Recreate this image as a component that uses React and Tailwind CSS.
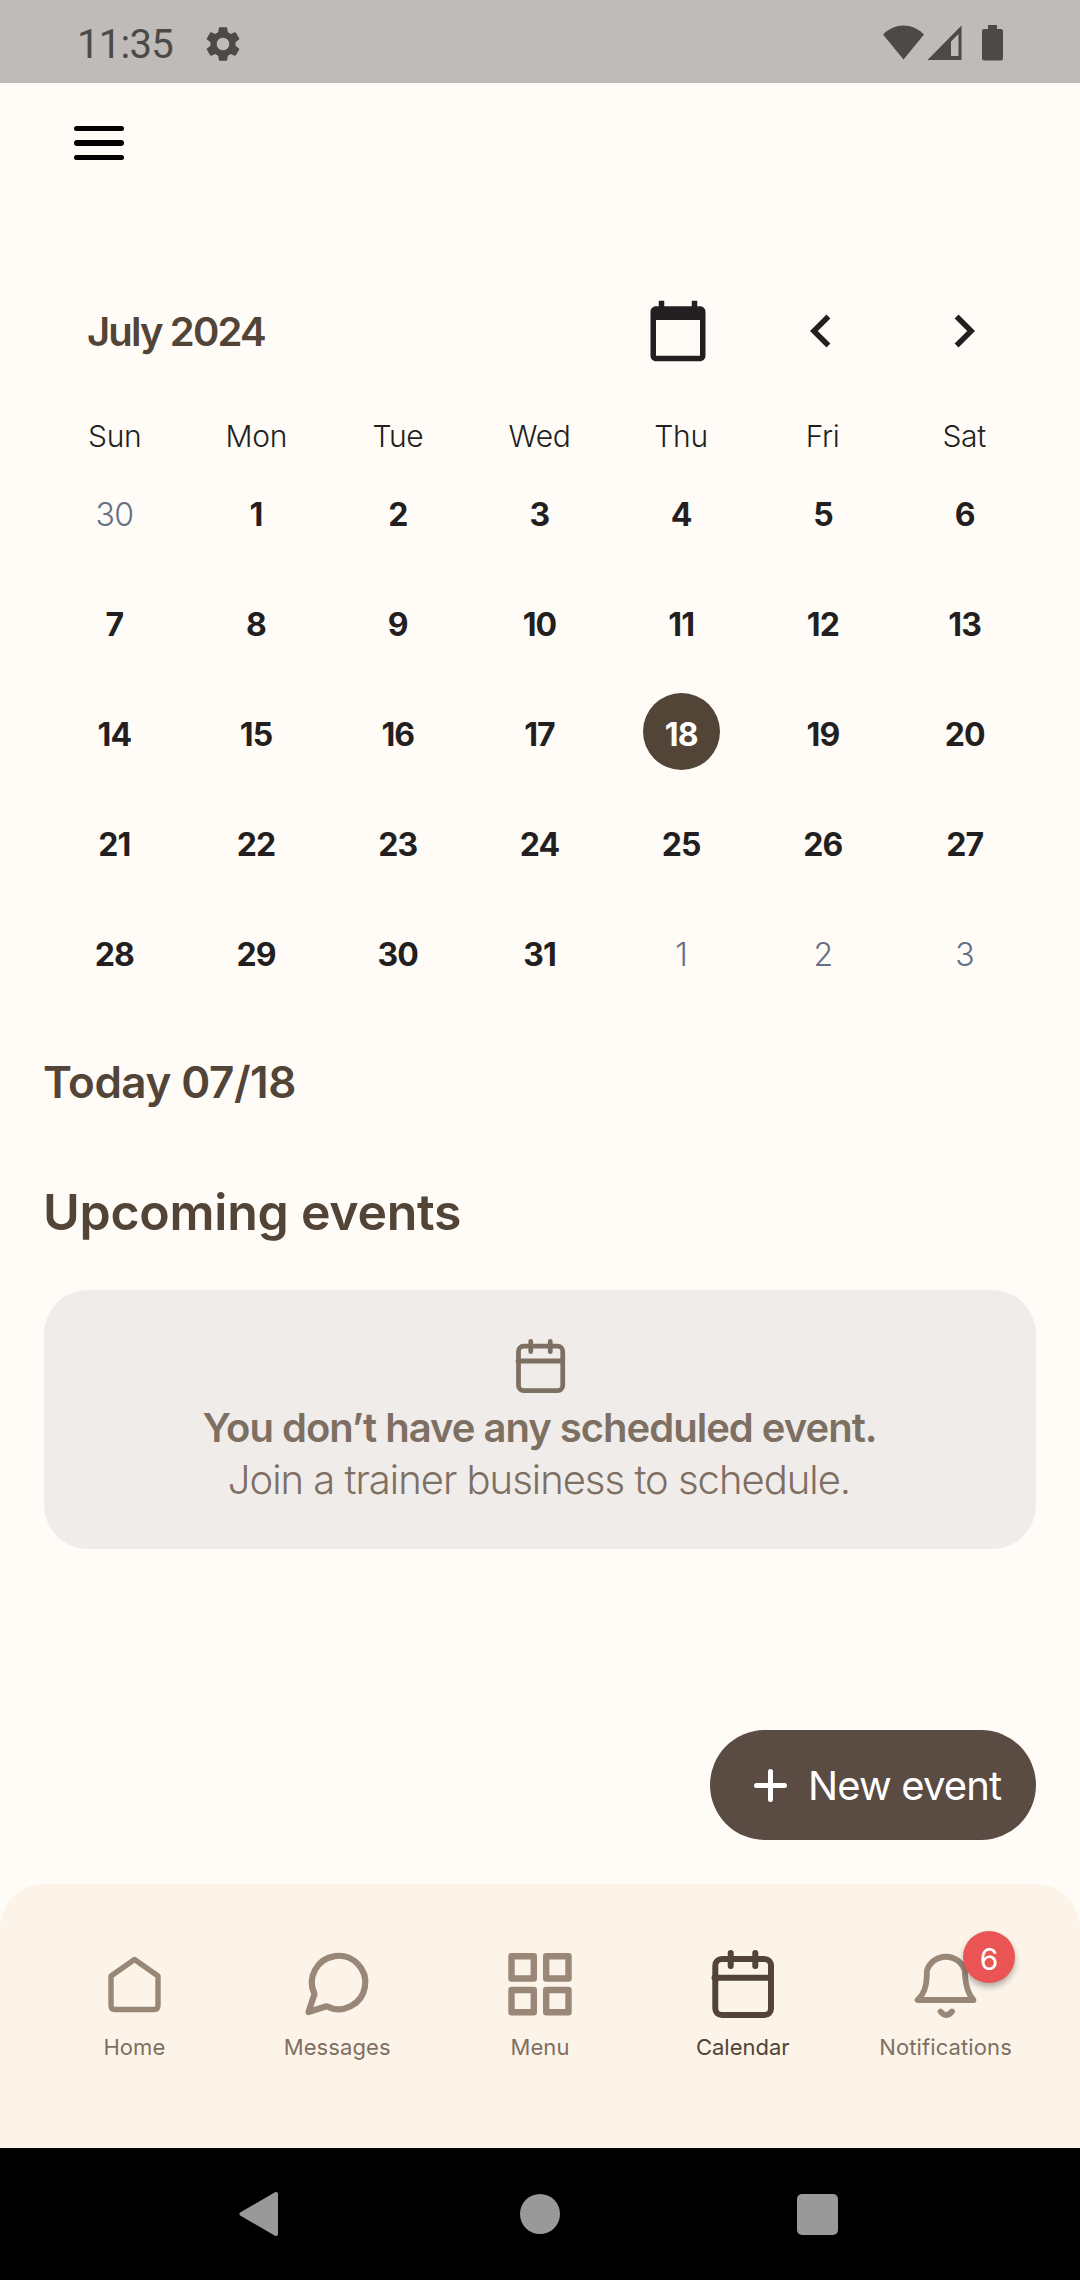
import React from "react";
import { MdSettings, MdCalendarToday, MdChevronLeft, MdChevronRight } from "react-icons/md";

const WEEKDAYS = ["Sun", "Mon", "Tue", "Wed", "Thu", "Fri", "Sat"];
const DAYS = [30, ...Array.from({ length: 31 }, (_, i) => i + 1), 1, 2, 3];

function StatusBar() {
  return (
    <div className="flex h-[83px] items-center justify-between bg-[#bfbbb8] pr-[77px] pl-[77px] text-[#4b4a47]">
      <div className="flex items-center pt-1">
        <span className="w-[125px] pt-[2px] font-[Roboto] text-[40px] leading-none tracking-[-0.7px]">11:35</span>
        <MdSettings className="h-[42px] w-[42px]" />
      </div>
      <svg className="mt-[3px] h-[36px] w-[120px]" viewBox="883 25 120 36" fill="currentColor">
        <path d="M883 34.5Q892 25.5 903.5 25.5T924 34.5L903.5 59.5Z" />
        <path fillRule="evenodd" d="M927.5 60L961.5 25.5V60ZM951 41.5V56H958.5V34Z" />
        <path d="M988 25h9v4h4a2 2 0 0 1 2 2v27.500a2 2 0 0 1-2 2h-17a2 2 0 0 1-2-2V31a2 2 0 0 1 2-2h4z" />
      </svg>
    </div>
  );
}

function Hamburger() {
  return (
    <div className="flex h-[120px] flex-col justify-center gap-[9px] pl-[74px]">
      <span className="h-[5.6px] w-[50px] rounded-full bg-black" />
      <span className="h-[5.6px] w-[50px] rounded-full bg-black" />
      <span className="h-[5.6px] w-[50px] rounded-full bg-black" />
    </div>
  );
}

function CalendarOutline({ className }) {
  return (
    <svg className={className} viewBox="711 1950 64 68" fill="none" stroke="currentColor" strokeWidth="6" strokeLinecap="round">
      <rect x="715.3" y="1959" width="55.700" height="56" rx="6.5" />
      <path d="M714.500 1977.700H770M730.700 1953V1966M755.300 1953V1966" />
    </svg>
  );
}

function MonthCalendar() {
  return (
    <section className="mt-[95px] px-11">
      <div className="flex h-[66px] items-center text-[#231f20]">
        <h2 className="flex-1 pt-px pl-[43px] text-[40px] font-semibold leading-none tracking-[-1.85px] text-[#524436]">July 2024</h2>
        <div className="flex gap-[77px] pr-[39px]">
          <MdCalendarToday className="h-[66px] w-[66px]" />
          <MdChevronLeft className="h-[66px] w-[66px]" />
          <MdChevronRight className="h-[66px] w-[66px]" />
        </div>
      </div>
      <div className="mt-[49px] grid h-[46px] grid-cols-7 items-center pr-px text-center text-[30px] font-light leading-none tracking-[-0.3px] text-[#231f20]">
        {WEEKDAYS.map((d) => (
          <span key={d}>{d}</span>
        ))}
      </div>
      <div className="grid grid-cols-7 text-[32px] leading-none">
        {DAYS.map((n, i) => {
          const outside = i === 0 || i > 31;
          if (i === 18) {
            return (
              <div key={i} className="flex h-[110px] items-center justify-center">
                <span className="mt-[-5px] flex h-[77px] w-[77px] items-center justify-center rounded-full bg-[#524436] pt-[7px] pr-px font-bold tracking-[-0.9px] text-white">
                  {n}
                </span>
              </div>
            );
          }
          return (
            <div
              key={i}
              className={
                outside
                  ? "flex h-[110px] items-center justify-center pt-[2px] pr-px font-light tracking-[-0.8px] text-[#667085]"
                  : "flex h-[110px] items-center justify-center pt-[2px] pr-px font-bold tracking-[-0.9px] text-[#231f20]"
              }
            >
              {n}
            </div>
          );
        })}
      </div>
    </section>
  );
}

function EmptyCard() {
  return (
    <div className="mx-11 mt-12 flex h-[259px] flex-col items-center rounded-[44px] bg-[#f0ecea] pt-[49px] text-[40px] leading-[52px] text-[#7e6f63]">
      <CalendarOutline className="h-[54px] w-[51px]" />
      <p className="mt-[9px] whitespace-nowrap pr-px font-semibold tracking-[-1px]">You don’t have any scheduled event.</p>
      <p className="whitespace-nowrap pr-[2px] font-light tracking-[-1px]">Join a trainer business to schedule.</p>
    </div>
  );
}

const HomeIcon = () => (
  <svg className="h-[68px] w-[68px]" viewBox="100.500 1950 68 68" fill="none" stroke="currentColor" strokeWidth="5.4" strokeLinejoin="round">
    <path d="M135 1959.500L158.500 1976V2005.500Q158.500 2009.500 154.500 2009.500H115.500Q111.500 2009.500 111.500 2005.500V1976Z" />
  </svg>
);

const MessageIcon = () => (
  <svg className="h-[68px] w-[68px]" viewBox="303.500 1950 68 68" fill="none" stroke="currentColor" strokeWidth="6.2" strokeLinejoin="round">
    <path d="M315 1994A26.700 26.700 0 1 1 327 2006.300L309 2012Z" />
  </svg>
);

const MenuIcon = () => (
  <svg className="h-[68px] w-[68px]" viewBox="506 1950 68 68" fill="none" stroke="currentColor" strokeWidth="6.4" strokeLinejoin="round">
    <path d="M511.500 1956.200h22.300v22.300h-22.300zM546.200 1956.200h22.300v22.300h-22.300zM511.500 1990h22.300v22.300h-22.300zM546.200 1990h22.300v22.300h-22.300z" />
  </svg>
);

const BellIcon = () => (
  <svg className="h-[68px] w-[68px]" viewBox="911.500 1950 68 68" fill="none" stroke="currentColor" strokeWidth="5.800" strokeLinejoin="round" strokeLinecap="round">
    <path d="M917 2000H973Q966 1992.500 964.500 1976V1971.500A19.500 18.500 0 0 0 926.300 1971.500V1976Q926 1992.500 917 2000Z" />
    <path d="M940 2011.500Q945.500 2018.500 951.500 2011.500" />
  </svg>
);

function NavItem({ icon, label, active, badge }) {
  return (
    <div className={active ? "flex flex-1 flex-col items-center text-[#524436]" : "flex flex-1 flex-col items-center text-[#998778]"}>
      <div className="relative">
        {icon}
        {badge && (
          <span className="absolute top-[-19px] left-[51.500px] flex h-[52px] w-[52px] items-center justify-center rounded-full bg-[#ea5455] pt-1 text-[30px] leading-none text-white shadow-[0_4px_6px_rgba(0,0,0,0.3)]">
            {badge}
          </span>
        )}
      </div>
      <span
        className={
          active
            ? "mt-[14px] text-[22px] leading-[30px] text-[#524436]"
            : "mt-[14px] text-[22px] leading-[30px] tracking-[0.1px] text-[#7e6f63]"
        }
      >
        {label}
      </span>
    </div>
  );
}

function SystemNav() {
  return (
    <div className="flex h-[132px] items-center justify-between bg-black pr-[242px] pl-[239px] text-[#999999]">
      <svg className="h-[46px] w-[40px]" viewBox="0 0 40 46" fill="currentColor" stroke="currentColor" strokeWidth="4" strokeLinejoin="round">
        <path d="M2.500 23L37 3V43Z" />
      </svg>
      <span className="ml-[3px] h-10 w-10 rounded-full bg-current" />
      <span className="h-[41px] w-[41px] rounded-[5px] bg-current" />
    </div>
  );
}

export default function App() {
  return (
    <div className="flex h-[2280px] w-[1080px] flex-col overflow-hidden bg-[#fffbf6] font-[Inter,sans-serif]">
      <StatusBar />
      <Hamburger />
      <MonthCalendar />
      <h3 className="mt-[43px] pl-[43px] text-[44px] font-semibold leading-[60px] tracking-[-0.5px] text-[#524436]">Today 07/18</h3>
      <h1 className="mt-[70px] pl-[43px] text-[50px] font-semibold leading-[60px] tracking-[-0.25px] text-[#524436]">Upcoming events</h1>
      <EmptyCard />
      <div className="mt-[181px] flex justify-end pr-11">
        <button className="flex h-[110px] w-[326px] items-center rounded-full bg-[#5a4b43] pl-[44px] text-white">
          <svg className="h-[33px] w-[33px]" viewBox="0 0 33 33" stroke="currentColor" strokeWidth="5" strokeLinecap="round">
            <path d="M16.500 2.500V30.500M2.500 16.500H30.500" />
          </svg>
          <span className="ml-[21px] whitespace-nowrap pt-[2px] text-[40px] leading-none tracking-[-0.85px]">New event</span>
        </button>
      </div>
      <nav className="mt-[44px] flex h-[264px] rounded-t-[44px] bg-[#fdf4e9] px-[33px] pt-[66px]">
        <NavItem icon={<HomeIcon />} label="Home" />
        <NavItem icon={<MessageIcon />} label="Messages" />
        <NavItem icon={<MenuIcon />} label="Menu" />
        <NavItem icon={<CalendarOutline className="h-[68px] w-[64px]" />} label="Calendar" active />
        <NavItem icon={<BellIcon />} label="Notifications" badge="6" />
      </nav>
      <SystemNav />
    </div>
  );
}
